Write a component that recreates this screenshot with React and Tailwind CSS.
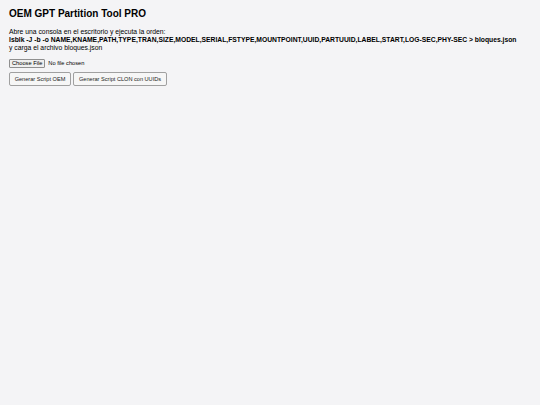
export default function App() {
  return (
    <div className="min-h-screen bg-[#f4f4f6] px-[9px] pt-[8px] text-black" style={{ fontFamily: '"Liberation Sans", Arial, sans-serif' }}>
      <h1 className="text-[10px] font-bold leading-[12px]">OEM GPT Partition Tool PRO</h1>
      <div className="mt-[8px] text-[6.8px] leading-[8px]">
        <p>Abre una consola en el escritorio y ejecuta la orden:</p>
        <p className="font-bold whitespace-nowrap text-[6.75px]">lsblk -J -b -o NAME,KNAME,PATH,TYPE,TRAN,SIZE,MODEL,SERIAL,FSTYPE,MOUNTPOINT,UUID,PARTUUID,LABEL,START,LOG-SEC,PHY-SEC &gt; bloques.json</p>
        <p>y carga el archivo bloques.json</p>
      </div>
      <div className="mt-[7px] flex items-center gap-[3px] text-[5.7px] h-[9px]">
        <span className="border border-[#8f8f8f] rounded-[1px] bg-[#efefef] px-[2px] leading-[7px]">Choose File</span>
        <span>No file chosen</span>
      </div>
      <div className="mt-[4px] flex gap-[2px] text-[5.6px]">
        <button className="h-[14px] w-[62px] border border-[#a0a0a0] rounded-[2px] bg-[#f6f6f6] text-[#222]">Generar Script OEM</button>
        <button className="h-[14px] w-[94px] border border-[#a0a0a0] rounded-[2px] bg-[#f6f6f6] text-[#222]">Generar Script CLON con UUIDs</button>
      </div>
    </div>
  );
}
